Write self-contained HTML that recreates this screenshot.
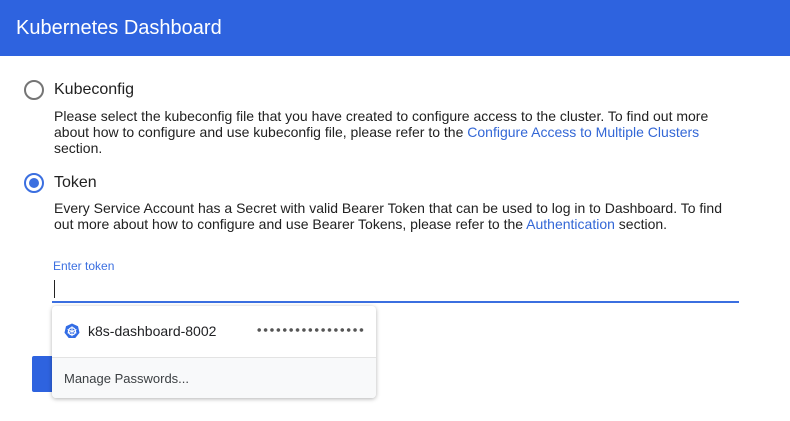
<!DOCTYPE html>
<html><head><style>
body{margin:0;width:790px;height:421px;overflow:hidden;background:#fff;font-family:"Liberation Sans",Arial,sans-serif;position:relative;color:#212121}
.hdr{position:absolute;left:0;top:0;width:790px;height:56px;background:#2e63df;color:#fff;font-size:20px;line-height:56px;padding-left:16px;box-sizing:border-box}
.radio{position:absolute;width:16px;height:16px;border:2px solid #757575;border-radius:50%}
.radio.on{border-color:#3b6fe0}
.radio.on::after{content:"";position:absolute;left:3px;top:3px;width:10px;height:10px;border-radius:50%;background:#3b6fe0}
.lbl{position:absolute;font-size:16px;color:#212121}
.desc{position:absolute;left:54px;width:680px;font-size:14px;line-height:16px;color:#212121}
a{color:#3367d6;text-decoration:none}
</style></head><body>
<div class="hdr">Kubernetes Dashboard</div>
<div class="radio" style="left:24px;top:80px"></div>
<div class="lbl" style="left:54px;top:81px">Kubeconfig</div>
<div class="desc" style="top:108px">Please select the kubeconfig file that you have created to configure access to the cluster. To find out more about how to configure and use kubeconfig file, please refer to the <a>Configure Access to Multiple Clusters</a> section.</div>
<div class="radio on" style="left:24px;top:173px"></div>
<div class="lbl" style="left:54px;top:174px">Token</div>
<div class="desc" style="top:200px">Every Service Account has a Secret with valid Bearer Token that can be used to log in to Dashboard. To find out more about how to configure and use Bearer Tokens, please refer to the <a>Authentication</a> section.</div>
<div style="position:absolute;left:53px;top:259px;font-size:12px;color:#3b6fe0">Enter token</div>
<div style="position:absolute;left:54px;top:280px;width:1px;height:18px;background:#222"></div>
<div style="position:absolute;left:52px;top:301px;width:687px;height:2px;background:#3b6fe0"></div>
<div style="position:absolute;left:32px;top:356px;width:60px;height:36px;background:#2e63df;border-radius:2px"></div>
<div style="position:absolute;left:52px;top:306px;width:324px;height:92px;background:#fff;border-radius:4px;box-shadow:0 1px 4px rgba(0,0,0,.3);overflow:hidden">
 <svg style="position:absolute;left:12px;top:17px" width="16" height="16" viewBox="0 0 16 16"><polygon points="8,0.5 14,3.3 15.5,9.8 11.3,15 4.7,15 0.5,9.8 2,3.3" fill="#326ce5"/><circle cx="8" cy="8.3" r="3.6" fill="none" stroke="#fff" stroke-width="1.2"/><path d="M8 3.3V13.3M3.5 6.5L12.5 10.1M12.5 6.5L3.5 10.1" stroke="#fff" stroke-width="0.9"/></svg>
 <div style="position:absolute;left:36px;top:17px;font-size:14px;color:#202124">k8s-dashboard-8002</div>
 <div style="position:absolute;left:204px;top:21px;width:108px;height:6px;background:radial-gradient(circle,#555 1.6px,transparent 2px) 0 0/6.4px 6px repeat-x"></div>
 <div style="position:absolute;left:0;top:51px;width:324px;height:41px;background:#f8f9fa;border-top:1px solid #e3e3e3"></div>
 <div style="position:absolute;left:12px;top:65px;font-size:13px;color:#3c4043">Manage Passwords...</div>
</div>
</body></html>
